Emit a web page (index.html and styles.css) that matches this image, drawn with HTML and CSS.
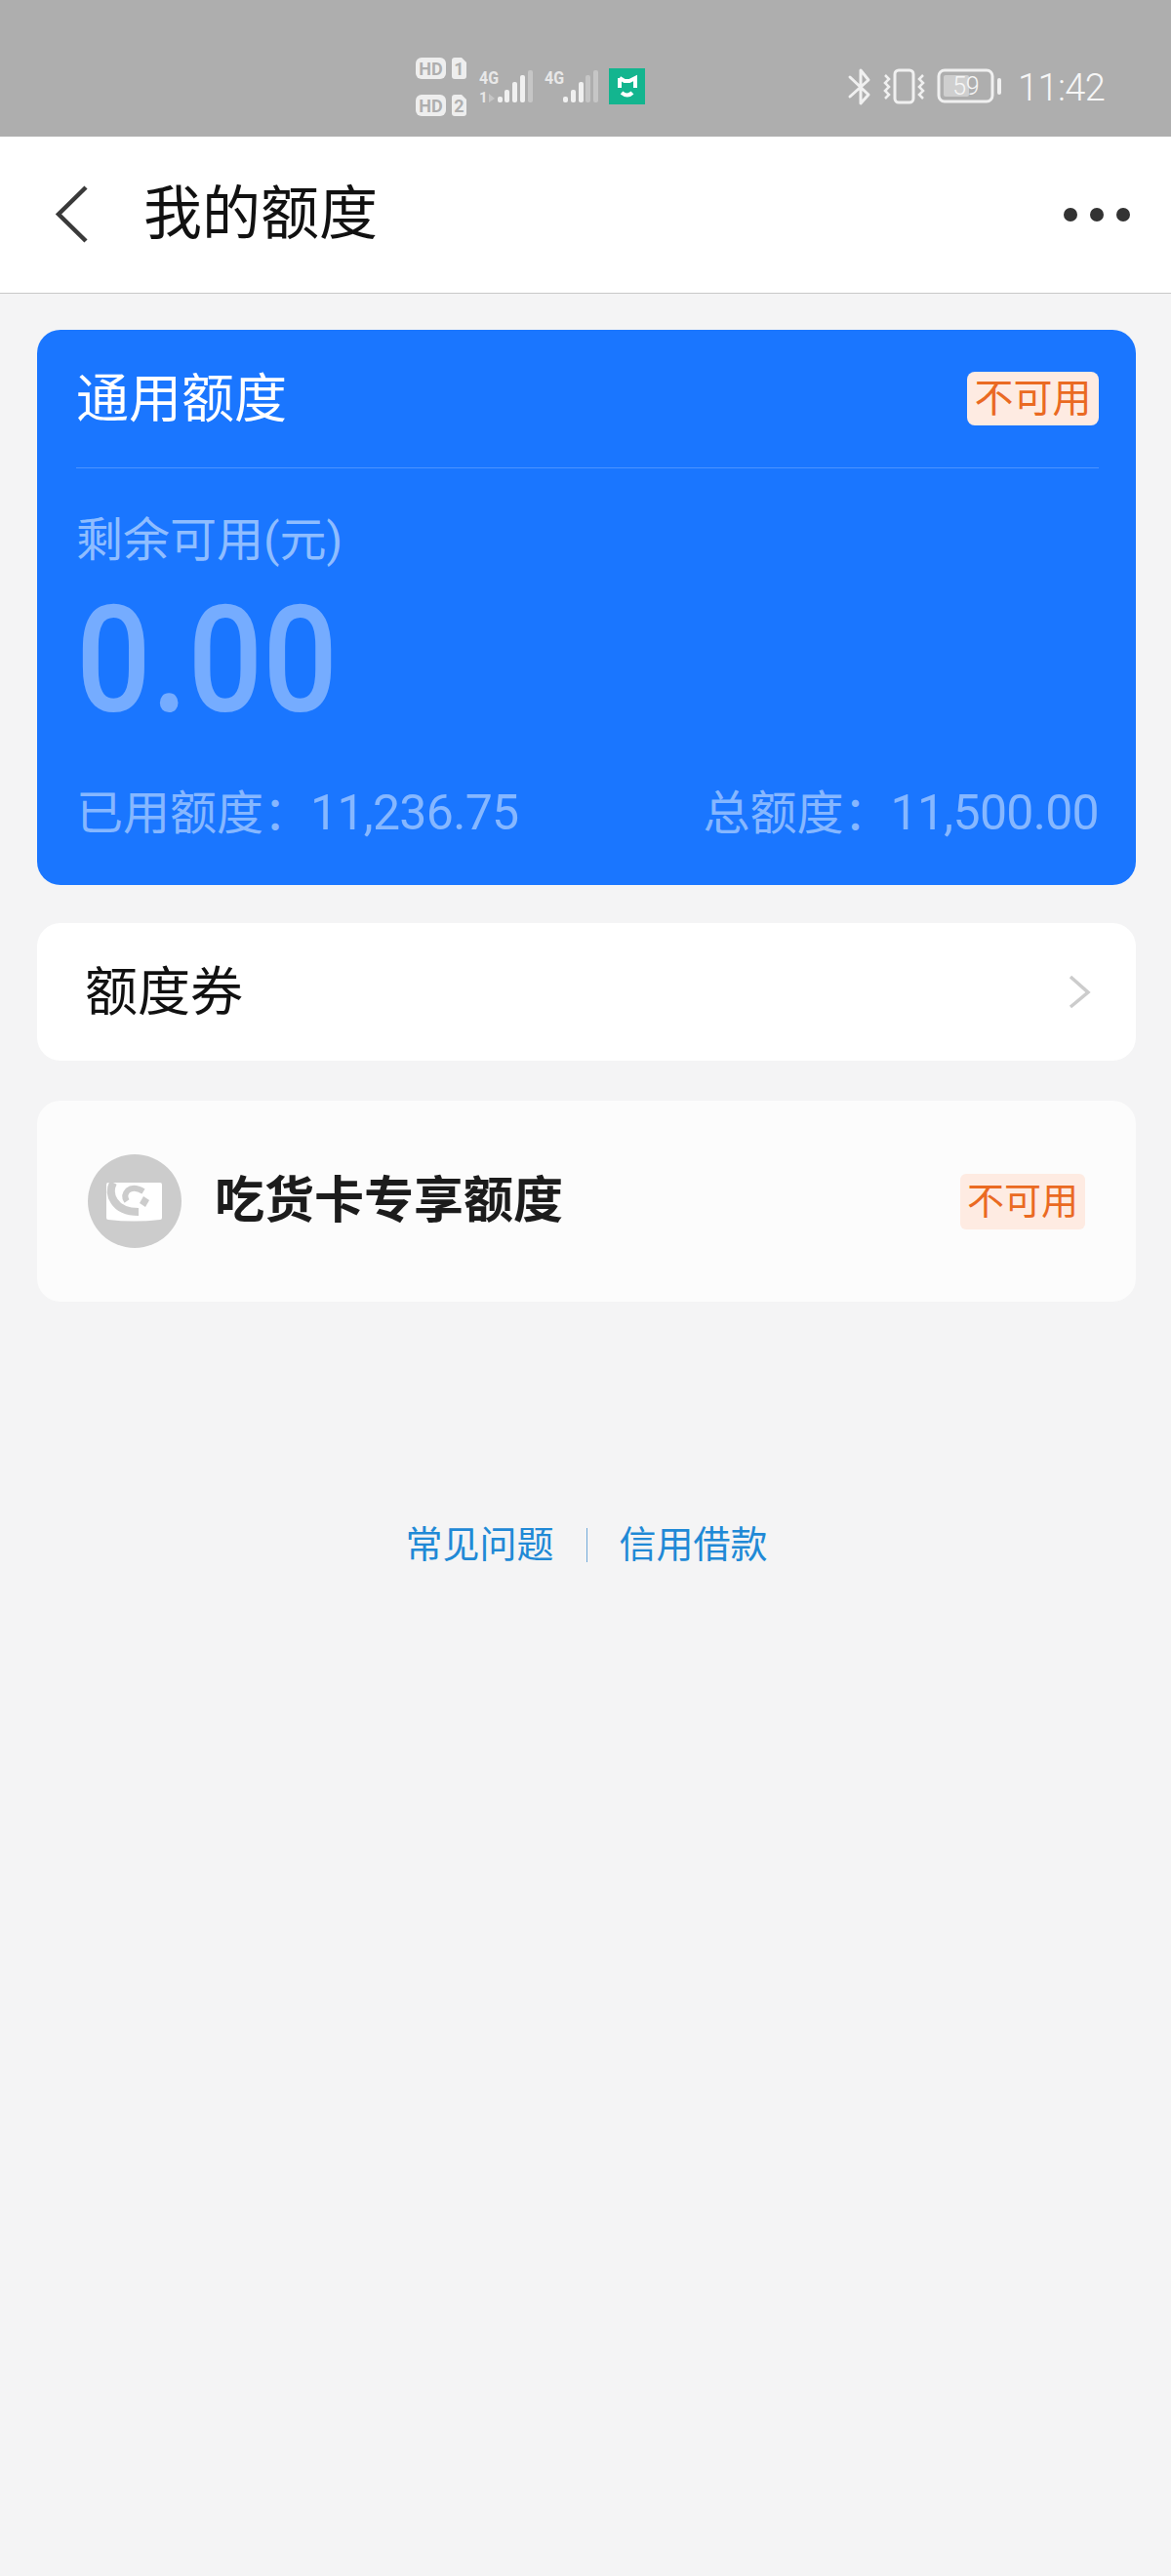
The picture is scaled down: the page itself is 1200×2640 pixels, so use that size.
FILE: index.html
```html
<!DOCTYPE html>
<html lang="zh-CN">
<head>
<meta charset="utf-8">
<title>我的额度</title>
<link rel="stylesheet" href="styles.css">
</head>
<body>
<div class="status">
  <svg class="status-left" viewBox="420 50 250 80" width="250" height="80">
    <rect class="chip" x="426" y="59" width="31" height="22" rx="6"/>
    <text class="chip-t" x="441.500" y="76.500">HD</text>
    <path class="chip" d="M466 59h7l5 5v14a3 3 0 0 1-3 3h-9a3 3 0 0 1-3-3V62a3 3 0 0 1 3-3z"/>
    <text class="chip-t" x="470.500" y="76.500">1</text>
    <rect class="chip" x="426" y="97" width="31" height="22" rx="6"/>
    <text class="chip-t" x="441.500" y="114.500">HD</text>
    <path class="chip" d="M466 97h7l5 5v14a3 3 0 0 1-3 3h-9a3 3 0 0 1-3-3v-16a3 3 0 0 1 3-3z"/>
    <text class="chip-t" x="470.500" y="114.500">2</text>

    <text class="net" x="491" y="86" textLength="20" lengthAdjust="spacingAndGlyphs">4G</text>
    <text class="net-s" x="491" y="105">1</text>
    <path class="dim" d="M501 96l6 5-6 4z"/>
    <rect class="bar" x="510" y="99" width="5" height="6" rx="2"/>
    <rect class="bar" x="517" y="92" width="5" height="13" rx="2"/>
    <rect class="bar" x="525" y="84" width="5" height="21" rx="2"/>
    <rect class="bar" x="533" y="77" width="5" height="28" rx="2"/>
    <rect class="dim" x="541" y="72" width="5" height="33" rx="2"/>

    <text class="net" x="558" y="86" textLength="20" lengthAdjust="spacingAndGlyphs">4G</text>
    <rect class="bar" x="577" y="99" width="5" height="6" rx="2"/>
    <rect class="bar" x="585" y="92" width="5" height="13" rx="2"/>
    <rect class="bar" x="593" y="84" width="5" height="21" rx="2"/>
    <rect class="dim" x="600" y="77" width="5" height="28" rx="2"/>
    <rect class="dim" x="608" y="72" width="5" height="33" rx="2"/>

    <rect class="mi" x="624" y="70" width="37" height="37"/>
    <path class="mi-line" d="M635 80l5 3h5l6-3v10"/>
    <path class="mi-line" d="M635 80v10"/>
    <path class="mi-line" d="M637 95q6 5 11 0"/>
  </svg>
  <svg class="status-right" viewBox="865 60 165 60" width="165" height="60">
    <path class="st" d="M871 79l19 18-8 9V72l8 10-19 17"/>
    <rect class="st" x="917" y="72" width="19" height="33" rx="4"/>
    <path class="st-thin" d="M907 77l4 4-4 4 4 4-4 4 4 4-4 4"/>
    <path class="st-thin" d="M946 77l-4 4 4 4-4 4 4 4-4 4 4 4"/>
    <rect class="st" x="962" y="72" width="55" height="32" rx="6"/>
    <rect class="batt" x="967" y="77" width="26" height="22" rx="2"/>
    <text class="batt-t" x="1003" y="97">59</text>
    <rect class="cap" x="1022" y="80" width="4" height="17" rx="2"/>
  </svg>
  <span class="time">11:42</span>
</div>

<header class="nav">
  <svg class="back" viewBox="0 0 36 60" width="36" height="60"><path d="M33 2L5 29.500 33 57"/></svg>
  <h1 class="nav-title">我的额度</h1>
  <div class="dots"><i></i><i></i><i></i></div>
</header>

<main class="content">
  <section class="quota">
    <div class="quota-head">
      <h2 class="quota-title">通用额度</h2>
      <span class="badge badge-top">不可用</span>
    </div>
    <div class="quota-label">剩余可用(元)</div>
    <div class="quota-value">0.00</div>
    <div class="quota-foot">
      <span>已用额度：<b class="num">11,236.75</b></span>
      <span>总额度：<b class="num">11,500.00</b></span>
    </div>
  </section>

  <section class="row-card">
    <span class="row-name">额度券</span>
    <svg class="chev" viewBox="0 0 24 36" width="24" height="36"><path d="M3 2l18 16L3 33"/></svg>
  </section>

  <section class="food-card">
    <div class="food-logo">
      <svg viewBox="0 0 96 96" width="96" height="96">
        <path class="logo-card" d="M21 29h53q2 0 2 2v34q0 2-2 2-27 3-53 0-2 0-2-2V31q0-2 2-2z"/>
        <path class="logo-line" d="M26 29q-5 10 1 19 7 11 25 11"/>
        <path class="logo-line thin" d="M57 38q-10-6-16-1-5 5-1 11"/>
        <path class="logo-dia" d="M57 43l6 4-4 7-6-4z"/>
      </svg>
    </div>
    <span class="food-name">吃货卡专享额度</span>
    <span class="badge badge-food">不可用</span>
  </section>

  <nav class="links">
    <a class="link">常见问题</a>
    <i class="link-sep"></i>
    <a class="link">信用借款</a>
  </nav>
</main>
</body>
</html>
```

FILE: styles.css
```css
* { box-sizing: border-box; }
html, body { margin: 0; padding: 0; }
body {
  width: 1200px;
  height: 2640px;
  background: #f4f4f5;
  font-family: Roboto, "Noto Sans CJK SC", sans-serif;
  overflow: hidden;
}

/* status bar */
.status {
  height: 140px;
  background: #aeaeae;
  display: flex;
  align-items: flex-start;
  padding-left: 420px;
}
.status-left { margin-top: 50px; flex: none; }
.status-right { margin-left: 195px; margin-top: 60px; flex: none; }
.time {
  margin-left: 13px;
  margin-top: 67px;
  font-size: 38px;
  line-height: 46px;
  font-weight: 300;
  letter-spacing: -0.6px;
  color: #f6f6f6;
}
.chip { fill: #eeeeee; }
.chip-t {
  fill: #aeaeae;
  font: 700 18px Roboto, sans-serif;
  text-anchor: middle;
}
.net { fill: #e8e8e8; font: 700 19px Roboto, sans-serif; }
.net-s { fill: #e8e8e8; font: 700 15px Roboto, sans-serif; }
.bar { fill: #f0f0f0; }
.dim { fill: #c6c6c6; }
.mi { fill: #13b58f; }
.mi-line { fill: none; stroke: #fff; stroke-width: 4; }
.st { fill: none; stroke: #f0f0f0; stroke-width: 3; stroke-linecap: round; stroke-linejoin: round; }
.st-thin { fill: none; stroke: #f0f0f0; stroke-width: 2.500; }
.batt { fill: #cfcfcf; }
.batt-t { fill: #f6f6f6; font: 300 25px Roboto, sans-serif; text-anchor: end; letter-spacing: -0.5px; }
.cap { fill: #f0f0f0; }

/* nav */
.nav {
  height: 161px;
  background: #fff;
  border-bottom: 1px solid #c8c8c8;
  display: flex;
  align-items: center;
  padding: 0 42px 0 55px;
}
.back { flex: none; }
.back path { fill: none; stroke: #3a3a3a; stroke-width: 4.500; }
.nav-title {
  margin: 0 0 0 56px;
  font-size: 60px;
  line-height: 70px;
  font-weight: 400;
  color: #111;
  flex: 1;
}
.dots { display: flex; gap: 13px; }
.dots i { width: 14px; height: 14px; border-radius: 50%; background: #333; }

/* content */
.content { padding: 37px 36px 0 38px; display: flex; flex-direction: column; }

.quota {
  height: 569px;
  background: #1a76ff;
  border-radius: 24px;
  padding: 0 38px 0 40px;
}
.quota-head {
  height: 142px;
  border-bottom: 1px solid rgba(255, 255, 255, 0.22);
  display: flex;
  align-items: center;
  justify-content: space-between;
}
.quota-title { margin: 3px 0 0; font-size: 54px; line-height: 64px; font-weight: 400; color: #fff; }
.badge { display: block; text-align: center; color: #ea6a22; background: #feebe2; }
.badge-top { width: 135px; height: 55px; border-radius: 8px; font-size: 40px; line-height: 55px; }
.quota-label {
  margin-top: 48px;
  font-size: 48px;
  line-height: 52px;
  color: #8fbdff;
}
.quota-value {
  margin-top: 32px;
  height: 130px;
  font-size: 152px;
  line-height: 130px;
  font-weight: 500;
  color: #75acff;
  transform: scaleX(0.89);
  transform-origin: 0 50%;
}
.quota-foot {
  margin-top: 63px;
  display: flex;
  justify-content: space-between;
  font-size: 48px;
  line-height: 56px;
  color: #86b7ff;
}
.num { font-weight: 400; letter-spacing: -0.7px; font-size: 50px; }

.row-card {
  margin-top: 39px;
  height: 141px;
  background: #fff;
  border-radius: 24px;
  display: flex;
  align-items: center;
  justify-content: space-between;
  padding: 0 46px 0 49px;
}
.row-name { margin-top: 2px; font-size: 54px; line-height: 64px; color: #111; }
.chev { flex: none; }
.chev path { fill: none; stroke: #cccccc; stroke-width: 3.500; }

.food-card {
  margin-top: 41px;
  height: 206px;
  background: #fcfcfc;
  border-radius: 24px;
  display: flex;
  align-items: center;
  padding: 0 52px;
}
.food-logo { width: 96px; height: 96px; border-radius: 50%; background: #cccccc; flex: none; }
.food-logo svg { display: block; }
.logo-card { fill: #fff; }
.logo-line { fill: none; stroke: #ccc; stroke-width: 8; }
.logo-line.thin { stroke-width: 6; }
.logo-dia { fill: #ccc; }
.food-name { margin-left: 34px; font-size: 51px; line-height: 60px; font-weight: 700; color: #1c1c1c; flex: 1; }
.badge-food { width: 128px; height: 57px; border-radius: 6px; font-size: 38px; line-height: 57px; }

.links {
  margin-top: 226px;
  display: flex;
  align-items: center;
  justify-content: center;
  gap: 33px;
  height: 46px;
}
.link { font-size: 38px; line-height: 46px; color: #2089d6; }
.link-sep { width: 1px; height: 35px; background: #6fa8d8; }
```
